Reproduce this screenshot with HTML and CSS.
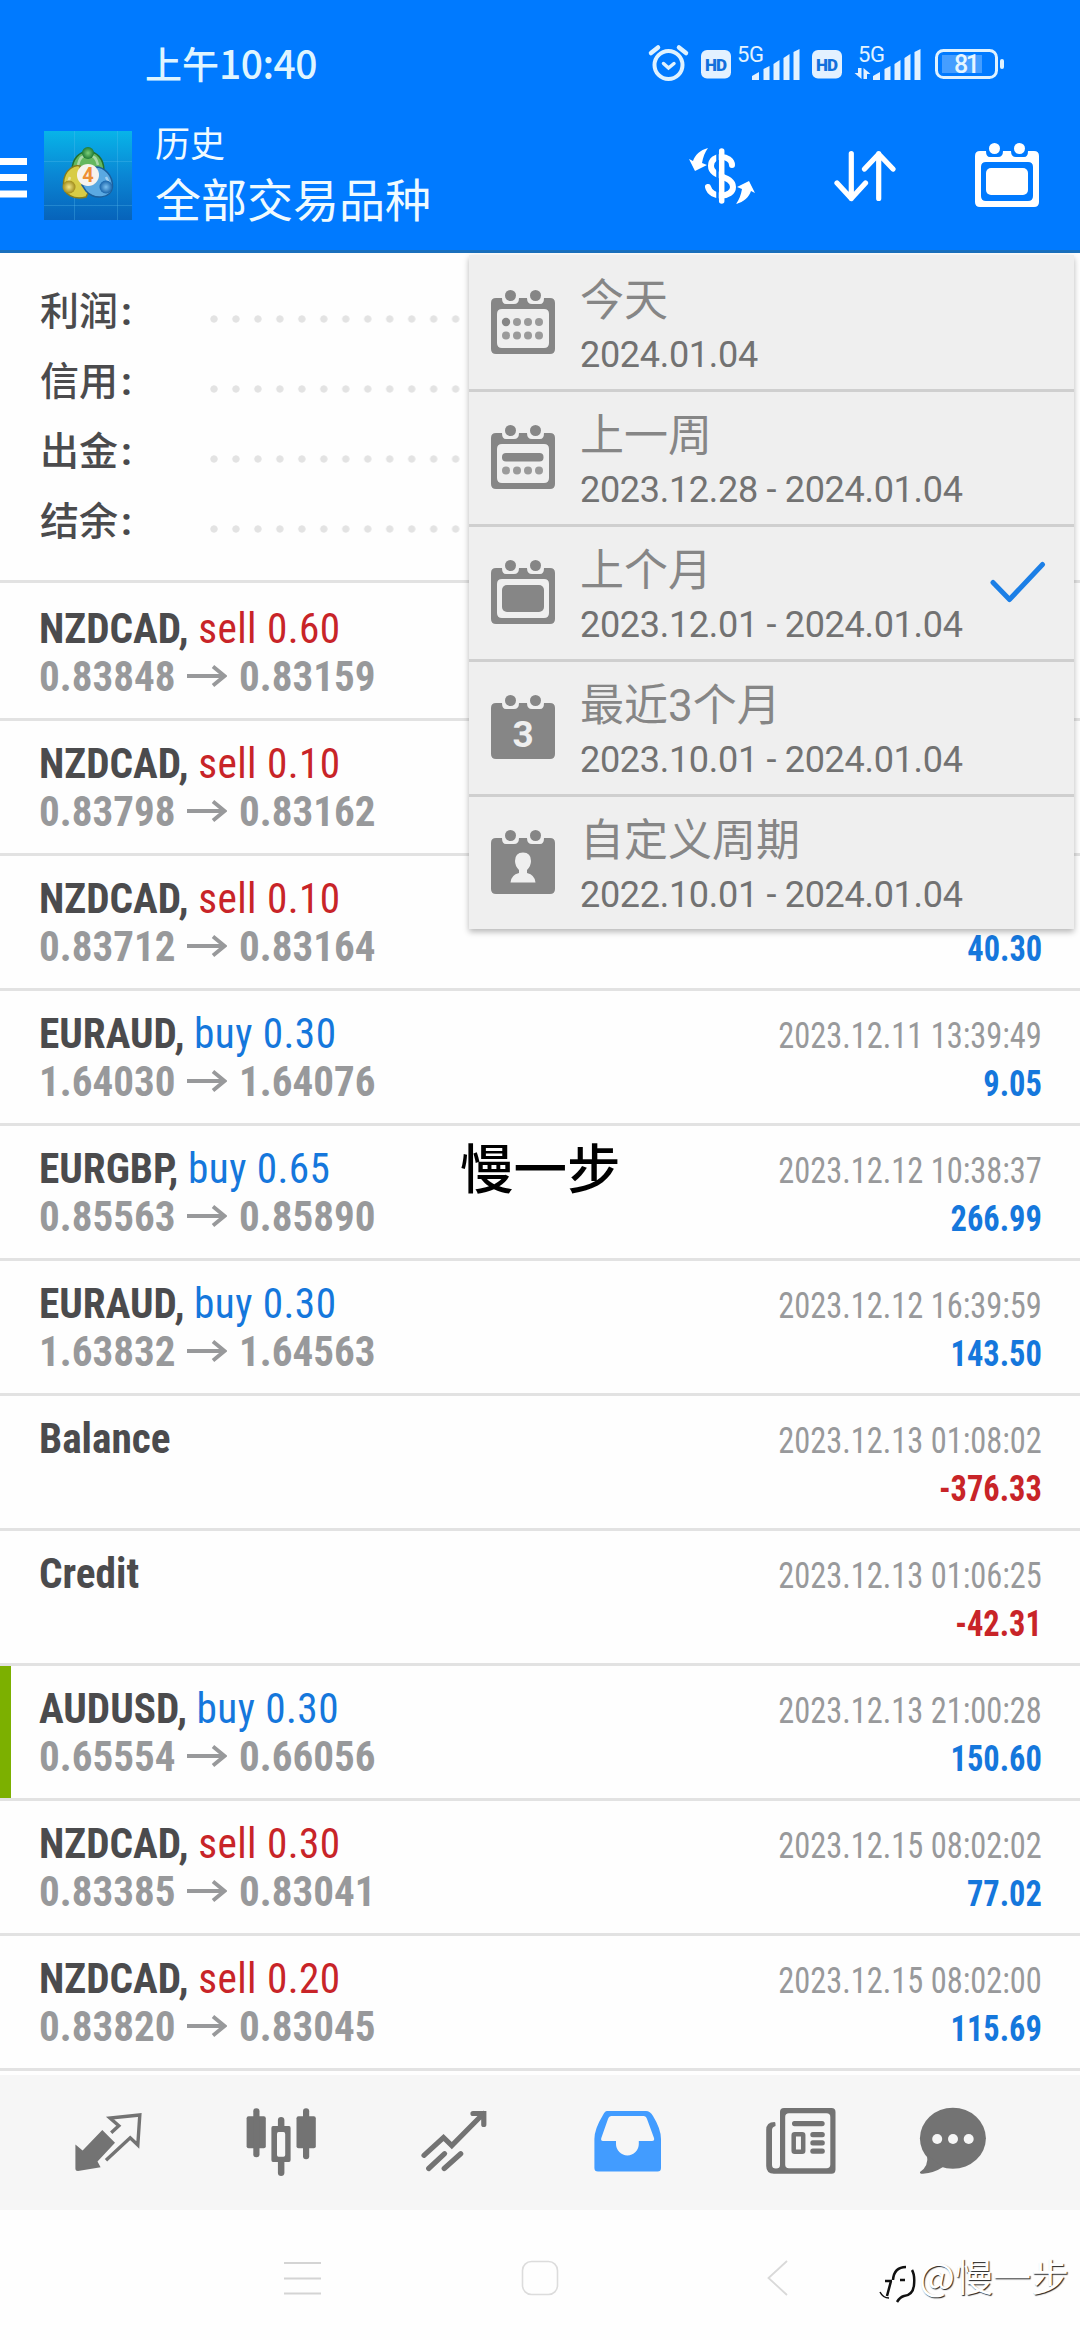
FILE: index.html
```html
<!DOCTYPE html>
<html lang="zh-CN">
<head>
<meta charset="utf-8">
<title>历史</title>
<link rel="stylesheet" href="styles.css">
</head>
<body>
<svg class="defs" width="0" height="0">
  <symbol id="arrow" viewBox="0 0 40 22"><path d="M0 11H37M26 1.500L37.500 11L26 20.500" fill="none" stroke="currentColor" stroke-width="3.800"/></symbol>
  <symbol id="cal-frame" viewBox="0 0 64 64">
    <path fill-rule="evenodd" d="M5 8H11Q11 14 15 14H23Q28 14 28 8H36Q36 14 41 14H49Q53 14 53 8H59Q64 8 64 13V59Q64 64 59 64H5Q0 64 0 59V13Q0 8 5 8ZM11 19Q6 19 6 24V53Q6 58 11 58H53Q58 58 58 53V24Q58 19 53 19Z"/>
    <circle cx="19.500" cy="5.500" r="5.500"/><circle cx="44.500" cy="5.500" r="5.500"/>
  </symbol>
  <symbol id="cal-solid" viewBox="0 0 64 64">
    <path d="M5 8H11Q11 14 15 14H23Q28 14 28 8H36Q36 14 41 14H49Q53 14 53 8H59Q64 8 64 13V59Q64 64 59 64H5Q0 64 0 59V13Q0 8 5 8Z"/>
    <circle cx="19.500" cy="5.500" r="5.500"/><circle cx="44.500" cy="5.500" r="5.500"/>
  </symbol>
</svg>
<div class="phone">
  <header class="header">
    <div class="status">
      <div class="clock">上午<span class="digits">10:40</span></div>
      <svg class="status-icons" width="365" height="46" viewBox="645 40 365 46">
        <g fill="none" stroke="#dff2ff" stroke-linecap="round">
          <circle cx="668.500" cy="65" r="14" stroke-width="4"/>
          <path d="M651 53L658 47.500M686 53L679 47.500" stroke-width="4.500"/>
          <path d="M663.500 63.500L668.500 68L674 63.500" stroke-width="3.500"/>
        </g>
        <g fill="#e3f1ff">
          <rect x="701" y="50" width="30" height="28.500" rx="6"/><rect x="812" y="50" width="30" height="28.500" rx="6"/>
          <path d="M752 80V76L759 72V80ZM763.500 80V69L769.500 66V80ZM773.500 80V64L779.500 60V80ZM783.500 80V58L789.500 54V80ZM793.500 80V52L799.500 49V80Z"/>
          <path d="M873 80V76L880 72V80ZM884.500 80V69L890.500 66V80ZM894.500 80V64L900.500 60V80ZM904.500 80V58L910.500 54V80ZM914.500 80V52L920.500 49V80Z"/>
          <path d="M858 68H861.500V79L854.500 73H858ZM863.500 79V68L870.500 74H867V79Z"/>
        </g>
        <text class="t-hd" x="705" y="70.500" textLength="22">HD</text><text class="t-hd" x="816" y="70.500" textLength="22">HD</text>
        <text class="t-5g" x="737" y="62" textLength="27">5G</text><text class="t-5g" x="858" y="62" textLength="27">5G</text>
        <rect x="936.500" y="50.500" width="60" height="27" rx="7" fill="none" stroke="#dff2ff" stroke-width="3"/>
        <rect x="942" y="55" width="40" height="18" fill="#fff" opacity=".27"/>
        <rect x="1000" y="59" width="4" height="10" rx="2" fill="#dff2ff"/>
        <text class="t-bat" x="954" y="73" textLength="26">81</text>
      </svg>
    </div>
    <div class="appbar">
      <svg width="28" height="42" viewBox="0 0 28 42" fill="#fff"><path d="M0 1H27V8H0ZM0 17H27V24H0ZM0 33.500H27V40.500H0Z"/></svg>
      <svg class="logo" width="88" height="89" viewBox="0 0 88 89">
        <defs>
          <linearGradient id="sky" x1="0" y1="0" x2="0" y2="1"><stop offset="0" stop-color="#08b4e8"/><stop offset=".5" stop-color="#0a86d4"/><stop offset="1" stop-color="#0763ba"/></linearGradient>
          <radialGradient id="gg"><stop offset="0" stop-color="#7ccf7a"/><stop offset="1" stop-color="#1f7a33"/></radialGradient>
          <radialGradient id="gy"><stop offset="0" stop-color="#f1e68a"/><stop offset="1" stop-color="#a08a18"/></radialGradient>
          <radialGradient id="gb"><stop offset="0" stop-color="#7cc0f0"/><stop offset="1" stop-color="#1864ab"/></radialGradient>
        </defs>
        <rect width="88" height="89" fill="url(#sky)"/>
        <path d="M0 30.500H88M0 74.500H88M30.500 0V89M73.500 0V89" stroke="#5cc0ee" stroke-opacity=".3"/>
        <path d="M28 40C28 14 60 14 60 40Q59 46 54 48L34 48Q29 46 28 40Z" fill="#65b85f" stroke="#24702c" stroke-width="1.500"/>
        <path d="M36 35C32 33 20 38 19.500 52C19 64 30 69 42 66L46 58L36 46Z" fill="#d8cc46" stroke="#857c1c" stroke-width="1.500"/>
        <path d="M52 36C60 36 69 44 68.500 56C67 68 50 69 42 60L38 54L50 52Z" fill="#5aa9e2" stroke="#1c5f9b" stroke-width="1.500"/>
        <path d="M34 34Q36 24 44 24T54 34M26 46L24 52M62 46L65 52" fill="none" stroke="#fff" stroke-opacity=".45" stroke-width="2.500"/>
        <circle cx="44" cy="22" r="6" fill="url(#gg)"/><circle cx="25" cy="56" r="6.500" fill="url(#gy)"/><circle cx="62" cy="56" r="6.500" fill="url(#gb)"/>
        <circle cx="44" cy="44" r="11" fill="#f7f3ee"/>
        <text class="t-logo" x="44" y="51" text-anchor="middle">4</text>
      </svg>
      <div class="titles"><div class="sub">历史</div><div class="main">全部交易品种</div></div>
      <svg class="i-cash" width="84" height="72" viewBox="680 140 84 72" fill="none" stroke="#fff">
        <path d="M732 165C732 155 711 153 711 166C711 178 733 175 733 187C733 198 711 199 708 187" stroke-width="6" stroke-linecap="round"/>
        <path d="M717.500 148V204" stroke="#007aff" stroke-width="2.500"/>
        <path d="M721.700 151V201" stroke-width="5.500" stroke-linecap="round"/>
        <g fill="#fff" stroke="none"><path id="swoop" d="M708 148C700 150 695 155 693 161L689 159L695 171L707 165L702 163C703 157 705 152 708 148Z"/><use href="#swoop" transform="rotate(180 722 176)"/></g>
      </svg>
      <svg class="i-sort" width="62" height="52" viewBox="834 150 62 52" fill="none" stroke="#fff" stroke-width="5.200" stroke-linecap="round" stroke-linejoin="round"><path d="M851.300 153.500V198.500M837 183L851.300 198.500L865.500 183M878.700 198.500V153.500M864.500 169L878.700 154L893 169"/></svg>
      <svg class="i-cal" width="64" height="64" viewBox="0 0 64 64" fill="#fff"><use href="#cal-frame"/><rect x="11" y="25" width="42" height="27" rx="5"/></svg>
    </div>
  </header>

  <section class="summary">
    <div class="sum-row"><span>利润<i>:</i></span><b></b></div>
    <div class="sum-row"><span>信用<i>:</i></span><b></b></div>
    <div class="sum-row"><span>出金<i>:</i></span><b></b></div>
    <div class="sum-row"><span>结余<i>:</i></span><b></b></div>
  </section>

  <main class="deals">
    <div class="deal first"><div class="l"><p class="sym">NZDCAD, <em class="sell">sell 0.60</em></p><p class="px"><span>0.83848</span><svg width="40" height="22"><use href="#arrow"/></svg><span>0.83159</span></p></div></div>
    <div class="deal"><div class="l"><p class="sym">NZDCAD, <em class="sell">sell 0.10</em></p><p class="px"><span>0.83798</span><svg width="40" height="22"><use href="#arrow"/></svg><span>0.83162</span></p></div></div>
    <div class="deal"><div class="l"><p class="sym">NZDCAD, <em class="sell">sell 0.10</em></p><p class="px"><span>0.83712</span><svg width="40" height="22"><use href="#arrow"/></svg><span>0.83164</span></p></div><div class="r"><p class="date"></p><p class="pl">40.30</p></div></div>
    <div class="deal"><div class="l"><p class="sym">EURAUD, <em class="buy">buy 0.30</em></p><p class="px"><span>1.64030</span><svg width="40" height="22"><use href="#arrow"/></svg><span>1.64076</span></p></div><div class="r"><p class="date">2023.12.11 13:39:49</p><p class="pl">9.05</p></div></div>
    <div class="deal"><div class="l"><p class="sym">EURGBP, <em class="buy">buy 0.65</em></p><p class="px"><span>0.85563</span><svg width="40" height="22"><use href="#arrow"/></svg><span>0.85890</span></p></div><div class="r"><p class="date">2023.12.12 10:38:37</p><p class="pl">266.99</p></div></div>
    <div class="deal"><div class="l"><p class="sym">EURAUD, <em class="buy">buy 0.30</em></p><p class="px"><span>1.63832</span><svg width="40" height="22"><use href="#arrow"/></svg><span>1.64563</span></p></div><div class="r"><p class="date">2023.12.12 16:39:59</p><p class="pl">143.50</p></div></div>
    <div class="deal"><div class="l"><p class="sym">Balance</p></div><div class="r"><p class="date">2023.12.13 01:08:02</p><p class="pl neg">-376.33</p></div></div>
    <div class="deal"><div class="l"><p class="sym">Credit</p></div><div class="r"><p class="date">2023.12.13 01:06:25</p><p class="pl neg">-42.31</p></div></div>
    <div class="deal marked"><div class="l"><p class="sym">AUDUSD, <em class="buy">buy 0.30</em></p><p class="px"><span>0.65554</span><svg width="40" height="22"><use href="#arrow"/></svg><span>0.66056</span></p></div><div class="r"><p class="date">2023.12.13 21:00:28</p><p class="pl">150.60</p></div></div>
    <div class="deal"><div class="l"><p class="sym">NZDCAD, <em class="sell">sell 0.30</em></p><p class="px"><span>0.83385</span><svg width="40" height="22"><use href="#arrow"/></svg><span>0.83041</span></p></div><div class="r"><p class="date">2023.12.15 08:02:02</p><p class="pl">77.02</p></div></div>
    <div class="deal"><div class="l"><p class="sym">NZDCAD, <em class="sell">sell 0.20</em></p><p class="px"><span>0.83820</span><svg width="40" height="22"><use href="#arrow"/></svg><span>0.83045</span></p></div><div class="r"><p class="date">2023.12.15 08:02:00</p><p class="pl">115.69</p></div></div>
  </main>

  <nav class="tabs">
    <svg width="80" height="84" viewBox="0 0 80 84"><path d="M7.400 49.500L14.600 55.500L34.300 35L47 47.700L29.500 66.500L32.600 72.300L10 76Q7.400 76 7.400 73.500Z" fill="#737373"/><path d="M43.200 37.700L50.800 30.700L42 23L71.800 20L69.800 50L62.200 42.800L38 65.200" fill="none" stroke="#737373" stroke-width="3.400"/></svg>
    <svg width="80" height="84" viewBox="0 0 80 84" fill="#737373"><rect x="5.600" y="21.300" width="19.200" height="32" rx="2"/><rect x="12.300" y="13.300" width="6.200" height="49" rx="3"/><path fill-rule="evenodd" d="M32 31H48Q49.600 31 49.600 33V65Q49.600 67 48 67H32Q30.400 67 30.400 65V33Q30.400 31 32 31ZM37.500 37Q36 37 36 39V60Q36 61.800 37.500 61.800H42.500Q44.200 61.800 44.200 60V39Q44.200 37 42.500 37Z"/><path d="M36.900 31V25Q37 22 40.100 22T43.400 25V31ZM36.900 67V78Q37 81 40.100 81T43.400 78V67Z"/><rect x="55.500" y="21.300" width="19.300" height="32" rx="2"/><rect x="62" y="13.300" width="6.200" height="51" rx="3"/></svg>
    <svg width="80" height="84" viewBox="0 0 80 84" fill="none" stroke="#737373" stroke-width="5.200" stroke-linecap="round"><path d="M10 60.300L29.500 42.500L37.800 50.500L69.500 18.500M59 18.500H69.800V29.500M14.700 73.500L30.600 58.700M30.200 73.500L46.700 58.700"/></svg>
    <svg width="80" height="84" viewBox="0 0 80 84"><path fill="#429cff" fill-rule="evenodd" d="M20 16H59Q63 16 66 21Q74 34 74 44V73Q74 76.500 70.500 76.500H11Q7.400 76.500 7.400 73V44Q7.400 34 16 20Q18 16 20 16ZM24.500 21Q22 21 21 24L14.300 43Q13.500 46 16 46H29V49A11.400 11.400 0 0 0 51.800 49V46H65Q67.800 46 67 43L60 24Q59 21 56.500 21Z"/></svg>
    <svg width="80" height="84" viewBox="0 0 80 84" fill="#737373"><path fill-rule="evenodd" d="M24 13H71.500Q75.500 13 75.500 17V74.500Q75.500 78.700 71.500 78.700H14Q6.200 78.700 6.200 71V35Q6.200 27 14.500 27Q15.500 27 15.500 29V31Q12 32 12 35V70Q12 73.500 16 73.500Q20 73.500 20 70V17Q20 13 24 13ZM29 18.300Q25.200 18.300 25.200 22V69.500Q25.200 73.300 29 73.300H66.500Q70.300 73.300 70.300 69.500V22Q70.300 18.300 66.500 18.300ZM34.500 26H62Q64.700 26 64.700 28.600T62 31.300H34.500Q32 31.300 32 28.600T34.500 26Z"/><rect x="33.700" y="39.200" width="9.500" height="17.600" fill="none" stroke="#737373" stroke-width="4.500" rx="1"/><rect x="50.300" y="37" width="14.500" height="5.200" rx="2.500"/><rect x="50.300" y="45.200" width="14.500" height="5.200" rx="2.500"/><rect x="50.300" y="53.600" width="14.500" height="5.200" rx="2.500"/></svg>
    <svg class="chat" width="80" height="84" viewBox="0 0 80 84"><ellipse cx="39.900" cy="43.300" rx="33" ry="30.500" fill="#737373"/><path d="M14 60Q16 71 7 77Q6.500 79 10 78.700Q21 78 30 72Z" fill="#737373"/><g fill="#f6f6f6"><circle cx="24.200" cy="44" r="5"/><circle cx="40" cy="44" r="5"/><circle cx="55.700" cy="44" r="5"/></g></svg>
  </nav>
  <div class="sysnav">
    <svg width="38" height="36" viewBox="0 0 38 36" stroke="#d4d4d4" stroke-width="2"><path d="M0 3H37M0 18.500H37M0 33.500H37"/></svg>
    <svg width="38" height="36" viewBox="0 0 38 36" fill="none"><rect x="1.500" y="1.500" width="35" height="33" rx="9" stroke="#dcdcdc" stroke-width="1.600"/></svg>
    <svg width="22" height="36" viewBox="0 0 22 36" fill="none" stroke="#d9d9d9" stroke-width="1.800"><path d="M20 1L1.500 18L20 35"/></svg>
  </div>

  <div class="menu">
    <div class="item"><svg width="64" height="64" viewBox="0 0 64 64"><use href="#cal-frame"/><circle cx="15" cy="32" r="4.200"/><g opacity=".8"><circle cx="26" cy="32" r="4"/><circle cx="37" cy="32" r="4"/><circle cx="48" cy="32" r="4"/><circle cx="15" cy="45.500" r="4"/><circle cx="26" cy="45.500" r="4"/><circle cx="37" cy="45.500" r="4"/><circle cx="48" cy="45.500" r="4"/></g></svg><div><p class="name">今天</p><p class="range">2024.01.04</p></div></div>
    <div class="item"><svg width="64" height="64" viewBox="0 0 64 64"><use href="#cal-frame"/><rect x="11" y="28" width="41.500" height="8.500" rx="4"/><g opacity=".8"><circle cx="15" cy="45.500" r="4"/><circle cx="26" cy="45.500" r="4"/><circle cx="37" cy="45.500" r="4"/><circle cx="48" cy="45.500" r="4"/></g></svg><div><p class="name">上一周</p><p class="range">2023.12.28 - 2024.01.04</p></div></div>
    <div class="item"><svg width="64" height="64" viewBox="0 0 64 64"><use href="#cal-frame"/><rect x="11" y="25" width="42" height="27" rx="5"/></svg><div><p class="name">上个月</p><p class="range">2023.12.01 - 2024.01.04</p></div><svg class="check" width="56" height="42" viewBox="0 0 56 42"><path d="M3 21.500L19.500 38.500L52.500 3.500" fill="none" stroke="#1c7fe6" stroke-width="5" stroke-linecap="round" stroke-linejoin="round"/></svg></div>
    <div class="item"><svg width="64" height="64" viewBox="0 0 64 64"><use href="#cal-solid"/><text class="t-cal" x="32" y="52" text-anchor="middle">3</text></svg><div><p class="name">最近3个月</p><p class="range">2023.10.01 - 2024.01.04</p></div></div>
    <div class="item"><svg width="64" height="64" viewBox="0 0 64 64"><use href="#cal-solid"/><path fill="#efefef" d="M32 22.500Q40 22.500 40 31Q40 36 36 40V43Q44 45 44.500 52.500H19.500Q20 45 28 43V40Q24 36 24 31Q24 22.500 32 22.500Z"/></svg><div><p class="name">自定义周期</p><p class="range">2022.10.01 - 2024.01.04</p></div></div>
  </div>
  <div class="owner">慢一步</div>
  <div class="credit"><svg width="40" height="42" viewBox="0 0 40 42" fill="none" stroke="#111"><path d="M14 19Q15 6 27 6M6 20H13M21 19H26M8 35L12 20" stroke-width="2.500"/><path d="M33 9Q36 14 35 24Q34 34 25 35Q21 36 18 41" stroke-width="2.500"/><path d="M1 31Q4 37 10 37" stroke-width="1.500"/></svg>@慢一步</div>
</div>
</body>
</html>
```
FILE: styles.css
```css
* { box-sizing: border-box; }
body { margin: 0; background: #fff; }
p { margin: 0; }
.defs { position: absolute; }
.phone {
  position: relative;
  width: 1080px;
  height: 2340px;
  overflow: hidden;
  background: #fefefe;
  font-family: Roboto, "Noto Sans CJK SC", sans-serif;
}
svg { display: block; flex: none; }

/* header */
.header { height: 253px; background: #007aff; border-bottom: 3px solid #1a70bd; color: #effaff; }
.status { height: 86px; padding: 40px 70px 0 145px; display: flex; justify-content: space-between; }
.clock { font: 500 37px/44px "Noto Sans CJK SC", sans-serif; color: #dff5ff; white-space: nowrap; }
.digits { font: 500 39px/44px "Noto Sans CJK SC", sans-serif; letter-spacing: -.5px; }
.t-hd { font: 900 17px Roboto, sans-serif; fill: #1270dc; }
.t-5g { font: 400 22px Roboto, sans-serif; fill: #e3f3ff; }
.t-bat { font: 500 25px Roboto, sans-serif; fill: #e6f6ff; }
.t-logo { font: 700 20px Roboto, sans-serif; fill: #ee8f35; }
.t-cal { font: 700 37px Roboto, sans-serif; fill: #efefef; }
.appbar { height: 164px; display: flex; align-items: flex-start; padding-top: 31px; }
.appbar > svg:first-child { margin-top: 40px; }
.logo { margin: 14px 23px 0 16px; }
.titles { width: 530px; white-space: nowrap; }
.sub { font: 400 35px/50px "Noto Sans CJK SC", sans-serif; }
.main { font: 400 46px/60px "Noto Sans CJK SC", sans-serif; }
.i-cash { margin: 23px 0 0 -5px; }
.i-sort { margin: 33px 79px 0 70px; }
.i-cal { margin-top: 26px; }

/* summary */
.summary { height: 330px; padding: 23px 40px 0; border-bottom: 3px solid #e2e2e2; }
.sum-row { height: 70px; display: flex; align-items: flex-start; }
.sum-row span { width: 163px; font: 500 39px/64px "Noto Sans CJK SC", sans-serif; color: #4b4b4d; }
.sum-row i { font: 700 39px/60px Roboto, sans-serif; margin-left: 3px; }
.sum-row b { flex: 1; height: 8px; margin-top: 39px; background: radial-gradient(circle, #e3e3e3 3.300px, transparent 4px) 0 0 / 21.980px 8px repeat-x; }

/* deals */
.deal { height: 135px; display: flex; justify-content: space-between; border-bottom: 3px solid #e2e2e2; padding: 18px 38px 0 39px; font-family: "Roboto Condensed", Roboto, sans-serif; line-height: 48px; white-space: nowrap; }
.deal.first { height: 138px; padding-top: 21px; }
.deal.marked { box-shadow: inset 11px 0 #7cb000; }
.sym, .px { font-size: 43px; font-weight: 700; color: #4b4b4d; }
.sym { transform: scaleX(.96); transform-origin: left; }
.sym em { font-style: normal; font-weight: 400; letter-spacing: .45px; }
.px { display: flex; align-items: center; color: #98999b; }
.px span { display: block; width: 148px; transform: scaleX(.955); transform-origin: left; }
.px svg { margin: -1px 12px 0 0; }
.sell { color: #c82428; }
.buy { color: #1577dc; }
.r { padding-top: 3px; text-align: right; font-size: 36px; transform: scaleX(.9); transform-origin: right; }
.date { height: 48px; color: #98999b; }
.pl { color: #1577dc; font-weight: 700; }
.pl.neg { color: #c82428; }

/* bottom bars */
.tabs { margin-top: 4px; height: 135px; padding: 20px 0 0 68px; display: flex; gap: 93px; background: #f6f6f6; }
.tabs .chat { margin-left: -20px; }
.sysnav { height: 130px; display: flex; align-items: flex-start; padding: 50px 0 0 284px; }
.sysnav svg:nth-child(2) { margin: 0 208px 0 199px; }

/* period menu */
.menu { position: absolute; left: 469px; top: 255px; width: 605px; background: #efefef; box-shadow: 0 3px 6px rgba(0, 0, 0, .28); color: #868686; fill: #868686; }
.item { height: 135px; display: flex; align-items: flex-start; padding: 11px 28px 0 22px; border-bottom: 3px solid #cfcfcf; white-space: nowrap; }
.item:first-child { height: 137px; padding-top: 13px; }
.item:last-child { height: 132px; border: 0; }
.item > svg:first-child { margin: 22px 25px 0 0; }
.name { padding-top: 3px; font-size: 44px; line-height: 60px; font-weight: 400; font-family: Roboto, "Noto Sans CJK SC", sans-serif; }
.range { font-size: 36px; line-height: 48px; color: #727272; letter-spacing: -.3px; }
.check { margin: 23px 0 0 auto; }

/* overlaid signatures */
.owner { position: absolute; left: 460px; top: 1126px; font: 500 53.500px/80px "Noto Sans CJK SC", sans-serif; color: #000; white-space: nowrap; }
.credit { position: absolute; left: 879px; top: 2247px; display: flex; align-items: center; font: 400 38px/56px "Noto Sans CJK SC", sans-serif; color: #fff; text-shadow: 1px 1px 1px #222; white-space: nowrap; }
.credit svg { margin-top: 14px; }
```
